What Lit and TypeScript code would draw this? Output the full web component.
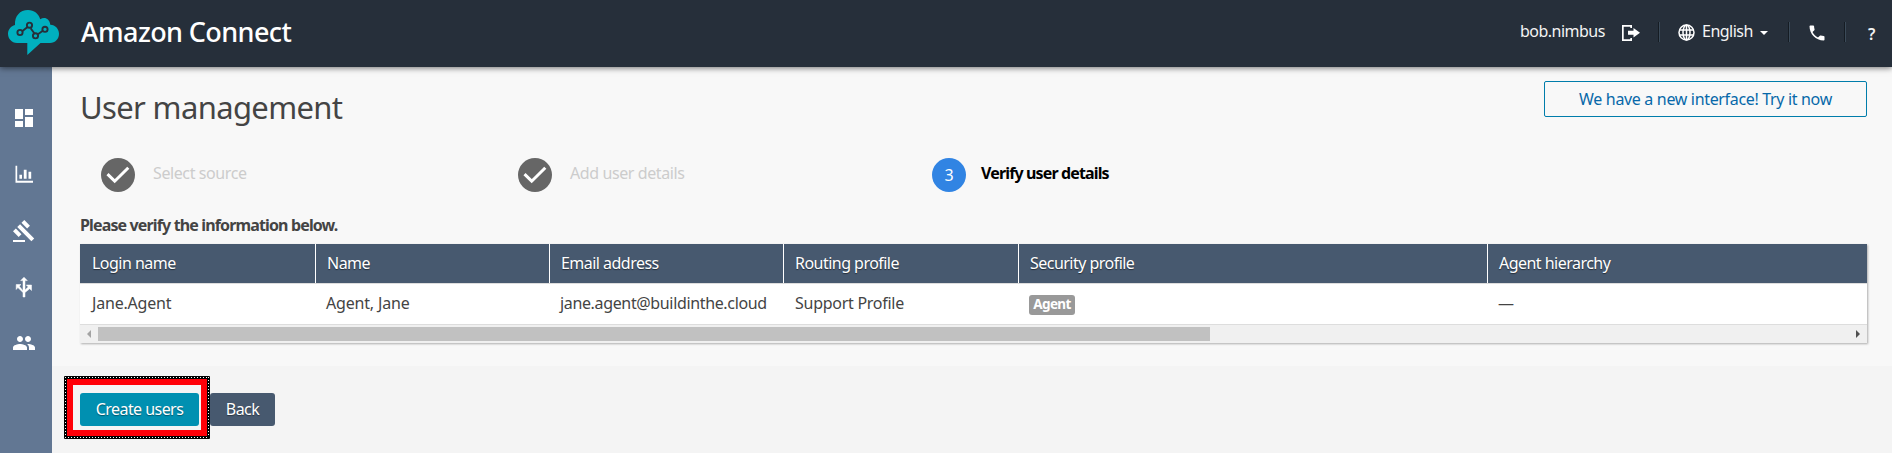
import { LitElement, html, css, svg } from "lit";
import { customElement } from "lit/decorators.js";

const columns = [
  { key: "login", label: "Login name" },
  { key: "name", label: "Name" },
  { key: "email", label: "Email address" },
  { key: "routing", label: "Routing profile" },
  { key: "security", label: "Security profile" },
  { key: "hierarchy", label: "Agent hierarchy" },
];

const navIcons = [
  svg`<path d="M3 13h8V3H3v10zm0 8h8v-6H3v6zm10 0h8V11h-8v10zm0-18v6h8V3h-8z"/>`,
  svg`<path d="M3.500 3.700H5.200V18.700H21V20.700H3.500zM7.400 12.700h2.600V16.700H7.400zM11.800 7.700h2.800v9h-2.800zM16.500 9.700h2.700v7h-2.700z"/>`,
  svg`<path d="M1 21h12v2H1zM5.245 8.070l2.830-2.827 14.140 14.142-2.828 2.828zM12.317 1l5.657 5.656-2.830 2.830-5.654-5.660zM3.825 9.485l5.657 5.657-2.828 2.828-5.657-5.657z"/>`,
  svg`<path stroke="#fff" stroke-width=".500" d="M12 2.200L8.700 5.600h2.300v10.200L7.300 11.200l1.700-1.700H4.200v5l1.700-1.900 5.100 5V22h2v-4.400l4.700-3.900 1.800 1.800V10h-5.200l1.900 1.900-3.200 3V5.600h2.300z"/>`,
  svg`<path d="M16 11c1.660 0 2.990-1.340 2.990-3S17.660 5 16 5s-3 1.340-3 3 1.340 3 3 3zm-8 0c1.660 0 2.990-1.340 2.990-3S9.660 5 8 5 5 6.340 5 8s1.340 3 3 3zm0 2c-2.330 0-7 1.170-7 3.500V19h14v-2.500C15 14.170 10.330 13 8 13zm8 0c-.290 0-.620.020-.970.050 1.160.840 1.970 1.970 1.970 3.450V19h6v-2.500c0-2.330-4.670-3.500-7-3.500z"/>`,
];

@customElement("app-header")
export class AppHeader extends LitElement {
  static styles = css`
    :host { display: flex; height: 67px; background: #262f3a; color: #fff; align-items: flex-start;
      box-shadow: 0 1px 6px rgba(0, 0, 0, .55); box-sizing: border-box; padding-right: 14px; position: relative; z-index: 2; }
    svg { display: block; flex: none; }
    .logo { width: 68px; height: 67px; }
    .brand { margin: 12px 0 0 13px; font-size: 27px; line-height: 40px; font-weight: 500; white-space: nowrap; letter-spacing: -.600px; }
    .tools { display: flex; align-items: center; margin-left: auto; height: 64px; font-size: 16px; white-space: nowrap; color: #f4f4f4; letter-spacing: -.520px; }
    .user { width: 85px; margin-top: -2px; }
    .out { margin: 2px 18px 0 17px; }
    .rule { width: 1px; height: 20px; margin-top: -1px; background: #151c23; border-right: 1px solid #3b4a58; }
    .globe { margin: 0 7px 0 18px; }
    .lang { width: 53px; margin-top: -2px; }
    .caret { margin: 2px 20px 0 5px; }
    .phone { margin: 2px 17px 0 17px; }
    .help { margin-left: 22px; width: 10px; font-weight: 600; padding-top: 3px; }
  `;
  render() {
    return html`
      <svg class="logo" viewBox="0 0 68 67">
        <path fill="#00b0bf" d="M17 43C11.500 43 8 38.500 8 33.800 8 29.500 11 26 15 25 14.500 16 20 10 28 10c6 0 10.800 3.800 12.200 9.300C44.500 16.300 49.500 18.500 50.300 24.700 55.500 25 59 29 59 33.800 59 39 55.200 43 50 43H40.500L27.300 55V43Z"/>
        <g fill="none" stroke="#262f3a" stroke-width="1.900">
          <path d="M22.200 31.200L27.500 27M30.600 28.200L34.300 33.300M37.900 34.300L42.800 30.800"/>
          <circle cx="20" cy="32.500" r="2.600"/><circle cx="29.500" cy="25.200" r="2.600"/>
          <circle cx="35.500" cy="35.800" r="2.600"/><circle cx="45" cy="29.300" r="2.600"/>
        </g>
      </svg>
      <div class="brand">Amazon Connect</div>
      <div class="tools">
        <span class="user">bob.nimbus</span>
        <svg class="out" width="18" height="16" viewBox="0 0 18 16" fill="#fff">
          <path d="M0 0h10v3H8.300V1.700H1.700v12.600h6.600V13H10v3H0z"/><path d="M6 5.800h5.500V3L18 7.800l-6.500 4.800V9.800H6z"/>
        </svg>
        <i class="rule"></i>
        <svg class="globe" width="17" height="17" viewBox="0 0 17 17" fill="none" stroke="#fff" stroke-width="1.500">
          <circle cx="8.500" cy="8.500" r="7.500"/><ellipse cx="8.500" cy="8.500" rx="3.500" ry="7.500"/><path d="M8.500 1v15M1.500 6h14M1.500 11h14"/>
        </svg>
        <span class="lang">English</span>
        <svg class="caret" width="8" height="4" viewBox="0 0 8 4" fill="#fff"><path d="M0 0h8L4 4z"/></svg>
        <i class="rule"></i>
        <svg class="phone" width="20" height="20" viewBox="0 0 24 24" fill="#fff">
          <path d="M6.620 10.790c1.440 2.830 3.760 5.140 6.590 6.590l2.200-2.200c.270-.270.670-.360 1.020-.240 1.120.370 2.330.570 3.570.570.550 0 1 .450 1 1V20c0 .550-.450 1-1 1-9.390 0-17-7.610-17-17 0-.550.450-1 1-1h3.500c.550 0 1 .450 1 1 0 1.250.200 2.450.570 3.570.110.350.030.740-.250 1.020l-2.200 2.200z"/>
        </svg>
        <i class="rule"></i>
        <span class="help">?</span>
      </div>`;
  }
}

@customElement("app-sidebar")
export class AppSidebar extends LitElement {
  static styles = css`
    :host { display: flex; flex-direction: column; gap: 32.300px; align-items: center; width: 52px; flex: none;
      background: #627793; padding: 39px 4px 0 0; box-sizing: border-box; }
    svg { display: block; flex: none; width: 24px; height: 24px; fill: #fff; }
  `;
  render() {
    return html`${navIcons.map((i) => html`<svg viewBox="0 0 24 24">${i}</svg>`)}`;
  }
}

@customElement("wizard-steps")
export class WizardSteps extends LitElement {
  static styles = css`
    :host { display: grid; grid-template-columns: 417px 414px 1fr; height: 34px; margin: 0 0 0 21px; }
    .step { display: flex; align-items: center; color: #ccc; font-size: 16px; white-space: nowrap; letter-spacing: -.400px; }
    .dot { width: 34px; height: 34px; border-radius: 50%; background: #666; flex: none; margin-right: 18px;
      display: flex; align-items: center; justify-content: center; }
    .label { margin-top: -4px; }
    .step.now { color: #000; }
    .now .label { font-weight: 700; letter-spacing: -.860px; }
    .now .dot { background: #3184e3; color: #fff; margin-right: 15px; }
  `;
  render() {
    const check = html`<svg width="24" height="18" viewBox="0 0 24 18" fill="none" stroke="#fff" stroke-width="3"><path d="M1.500 8.200L8.700 15.200L22.300 1.700"/></svg>`;
    return html`
      <div class="step"><span class="dot">${check}</span><span class="label">Select source</span></div>
      <div class="step"><span class="dot">${check}</span><span class="label">Add user details</span></div>
      <div class="step now"><span class="dot">3</span><span class="label">Verify user details</span></div>`;
  }
}

@customElement("user-table")
export class UserTable extends LitElement {
  static styles = css`
    :host { display: block; width: 1787px; background: #fff; box-shadow: 1px 1px 2px rgba(0, 0, 0, .3); }
    .row { display: grid; grid-template-columns: 236px 234px 234px 235px 469px 1fr; white-space: nowrap; font-size: 16px; }
    .head { background: #47596f; color: #fff; height: 39px; line-height: 38px; letter-spacing: -.530px; text-shadow: 0 1px 1px rgba(0, 0, 0, .5); }
    .head .cell { padding-left: 11px; border-right: 1px solid #fff; }
    .head .cell:first-child { padding-left: 12px; }
    .head .cell:last-child { border: 0; }
    .body { height: 40px; line-height: 39px; border-top: 1px solid #ddd; border-bottom: 1px solid #ddd; color: #444; letter-spacing: -.350px; }
    .body .cell { padding-left: 10px; }
    .body .cell:first-child { padding-left: 12px; letter-spacing: -.200px; }
    .body .name { letter-spacing: -.180px; }
    .body .routing { padding-left: 11px; letter-spacing: -.270px; }
    .badge { display: inline-block; width: 46px; height: 20px; line-height: 19px; border-radius: 3px; background: #999; color: #fff;
      font-size: 13.500px; font-weight: 700; text-align: center; vertical-align: middle; letter-spacing: -.600px; margin-top: 1px; }
    .bar { height: 18px; background: #f0f0f0; display: flex; align-items: center; }
    .thumb { width: 1112px; height: 14px; background: #c1c1c1; margin: -1px auto 0 7px; }
    .left { margin-left: 7px; }
    .right { margin-right: 7px; }
  `;
  render() {
    const user: Record<string, unknown> = {
      login: "Jane.Agent", name: "Agent, Jane", email: "jane.agent@buildinthe.cloud", routing: "Support Profile",
      security: html`<span class="badge">Agent</span>`, hierarchy: "—",
    };
    return html`
      <div class="row head">${columns.map((c) => html`<div class="cell ${c.key}">${c.label}</div>`)}</div>
      <div class="row body">${columns.map((c) => html`<div class="cell ${c.key}">${user[c.key]}</div>`)}</div>
      <div class="bar">
        <svg class="left" width="4" height="8" viewBox="0 0 4 8"><path fill="#a3a3a3" d="M4 0v8L0 4z"/></svg>
        <div class="thumb"></div>
        <svg class="right" width="4" height="8" viewBox="0 0 4 8"><path fill="#505050" d="M0 0v8l4-4z"/></svg>
      </div>`;
  }
}

@customElement("app-root")
export class AppRoot extends LitElement {
  static styles = css`
    :host { display: flex; flex-direction: column; height: 453px; overflow: hidden; background: #f8f8f8; color: #444;
      font-family: "Noto Sans", "Open Sans", sans-serif; font-size: 16px; }
    .shell { display: flex; flex: 1; }
    .main { flex: 1; display: flex; flex-direction: column; min-width: 0; }
    .content { padding: 14px 25px 0 28px; height: 285px; }
    .top { display: flex; justify-content: space-between; align-items: flex-start; height: 77px; }
    .title { margin: 4px 0 0 0; font-size: 31px; line-height: 44px; font-weight: 400; white-space: nowrap; letter-spacing: -.650px; }
    .promo { box-sizing: border-box; width: 323px; height: 36px; line-height: 35px; border: 1px solid #007dab; border-radius: 2px;
      color: #0768a9; text-align: center; white-space: nowrap; letter-spacing: -.330px; }
    .lead { height: 52px; padding: 22px 0 0 0; box-sizing: border-box; line-height: 22px; font-weight: 700; letter-spacing: -.860px; white-space: nowrap; }
    .footer { flex: 1; background: #f4f4f4; padding: 10px 0 0 12px; display: flex; align-items: flex-start; }
    .focus { box-sizing: border-box; height: 63px; width: 146px; padding: 3px; background-color: #000; border-radius: 1px;
      background-image:
        repeating-linear-gradient(90deg, #fff 0 1px, #000 1px 3px), repeating-linear-gradient(90deg, #fff 0 1px, #000 1px 3px),
        repeating-linear-gradient(#fff 0 1px, #000 1px 3px), repeating-linear-gradient(#fff 0 1px, #000 1px 3px);
      background-size: 142px 1px, 142px 1px, 1px 60px, 1px 60px;
      background-position: 1px 1px, 1px 61px, 1px 1px, 144px 1px;
      background-repeat: no-repeat; }
    .mark { border: 6px solid #ff0008; padding: 8px 2px 0 7px; width: 119px; height: 37px; background: #f4f4f4; }
    .btn { height: 33px; line-height: 32px; border-radius: 3px; text-align: center; color: #fff; white-space: nowrap;
      text-shadow: 0 1px 1px rgba(0, 0, 0, .4); letter-spacing: -.550px; }
    .create { background: #0090b1; }
    .back { background: #47596f; width: 65px; margin-top: 17px; }
  `;
  render() {
    return html`
      <app-header></app-header>
      <div class="shell">
        <app-sidebar></app-sidebar>
        <div class="main">
          <div class="content">
            <div class="top"><h1 class="title">User management</h1><div class="promo">We have a new interface! Try it now</div></div>
            <wizard-steps></wizard-steps>
            <div class="lead">Please verify the information below.</div>
            <user-table></user-table>
          </div>
          <div class="footer">
            <div class="focus"><div class="mark"><div class="btn create">Create users</div></div></div>
            <div class="btn back">Back</div>
          </div>
        </div>
      </div>`;
  }
}
